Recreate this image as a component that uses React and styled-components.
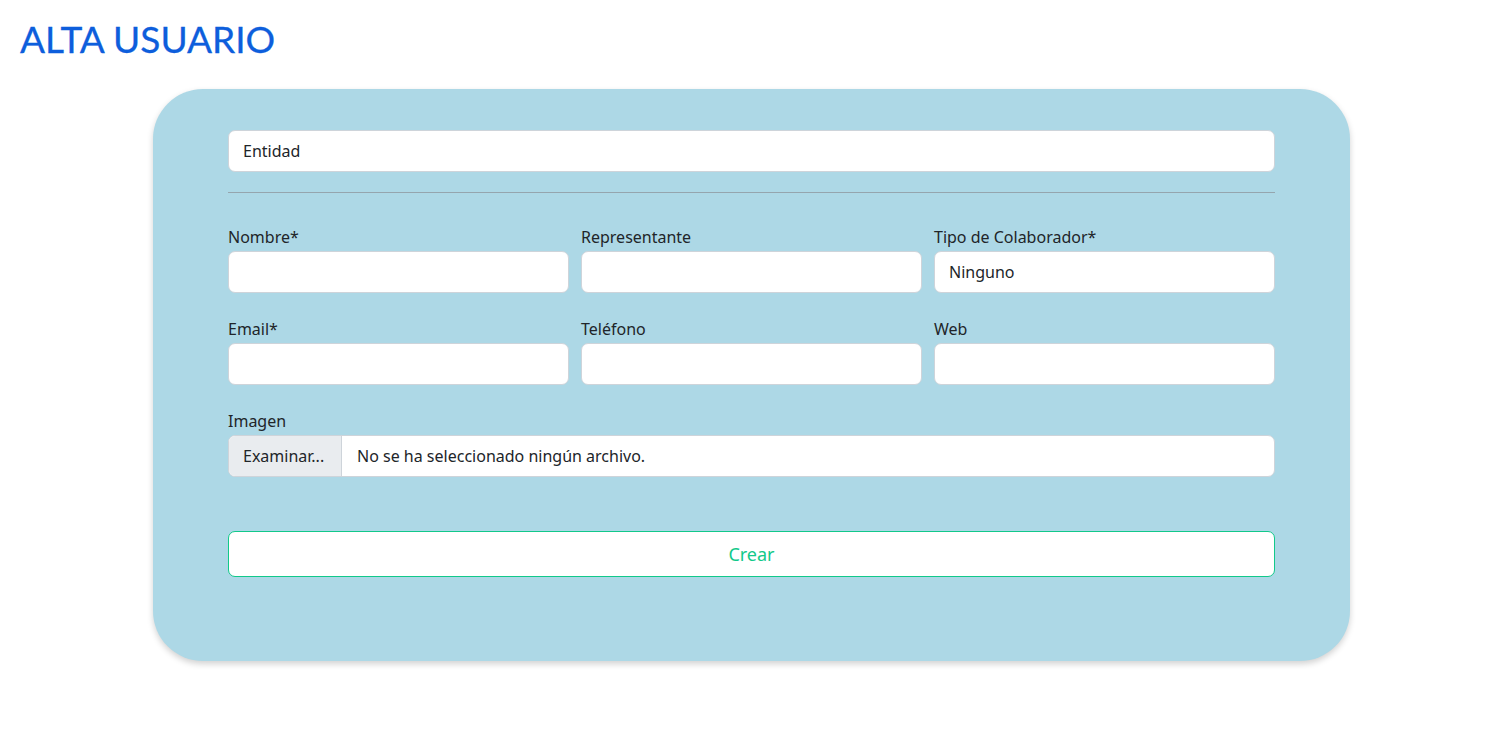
import React from "react";
import styled, { createGlobalStyle } from "styled-components";

const Global = createGlobalStyle`
  html, body { margin: 0; padding: 0; background: #ffffff; }
  body { font-family: "Noto Sans", "Open Sans", sans-serif; color: #212529; }
  * { box-sizing: border-box; }
`;

const Page = styled.div`
  padding: 15px 20px 40px 20px;
`;

const Title = styled.h1`
  margin: 0;
  font-family: Lato, "Noto Sans", sans-serif;
  font-size: 37px;
  line-height: 48px;
  font-weight: 400;
  color: #0d5edc;
  -webkit-text-stroke: 0.3px #0d5edc;
`;

const Card = styled.form`
  margin: 26px 0 0 133px;
  width: 1197px;
  background: #add8e6;
  border-radius: 50px;
  padding: 41px 75px 84px 75px;
  box-shadow: 0 3px 6px rgba(0, 0, 0, 0.18);
  display: flex;
  flex-direction: column;
`;

const Field = styled.div`
  height: 42px;
  background: #ffffff;
  border: 1px solid #ced4da;
  border-radius: 7px;
  display: flex;
  align-items: center;
  padding: 0 14px;
  font-size: 16px;
  color: #212529;
`;

const Divider = styled.hr`
  margin: 20px 0 0 0;
  border: 0;
  border-top: 1px solid #95a5ae;
  height: 0;
`;

const Grid = styled.div`
  display: grid;
  grid-template-columns: repeat(3, 1fr);
  column-gap: 12px;
  row-gap: 20px;
  margin-top: 28px;
`;

const Group = styled.div`
  display: flex;
  flex-direction: column;
  grid-column: ${(p) => (p.$full ? "1 / -1" : "auto")};
`;

const Label = styled.label`
  font-size: 16px;
  line-height: 24px;
  padding-top: 4px;
  margin-bottom: 2px;
  color: #212529;
`;

const FileField = styled.div`
  height: 42px;
  background: #ffffff;
  border: 1px solid #ced4da;
  border-radius: 7px;
  display: flex;
  align-items: stretch;
  overflow: hidden;
  font-size: 16px;
`;

const FileButton = styled.span`
  width: 113px;
  background: #e9ecef;
  border-right: 1px solid #ced4da;
  display: flex;
  align-items: center;
  padding-left: 14px;
  white-space: nowrap;
`;

const FileName = styled.span`
  display: flex;
  align-items: center;
  padding-left: 15px;
`;

const Submit = styled.button`
  margin-top: 54px;
  height: 46px;
  width: 100%;
  background: #ffffff;
  border: 1px solid #12c98a;
  border-radius: 7px;
  color: #12c98a;
  font-family: inherit;
  font-size: 18px;
  cursor: pointer;
`;

const fields = [
  { label: "Nombre*" },
  { label: "Representante" },
  { label: "Tipo de Colaborador*", value: "Ninguno" },
  { label: "Email*" },
  { label: "Teléfono" },
  { label: "Web" },
];

export default function App() {
  return (
    <Page>
      <Global />
      <Title>ALTA USUARIO</Title>
      <Card onSubmit={(e) => e.preventDefault()}>
        <Field>Entidad</Field>
        <Divider />
        <Grid>
          {fields.map((f) => (
            <Group key={f.label}>
              <Label>{f.label}</Label>
              <Field>{f.value || ""}</Field>
            </Group>
          ))}
          <Group $full>
            <Label>Imagen</Label>
            <FileField>
              <FileButton>Examinar...</FileButton>
              <FileName>No se ha seleccionado ningún archivo.</FileName>
            </FileField>
          </Group>
        </Grid>
        <Submit type="submit">Crear</Submit>
      </Card>
    </Page>
  );
}
